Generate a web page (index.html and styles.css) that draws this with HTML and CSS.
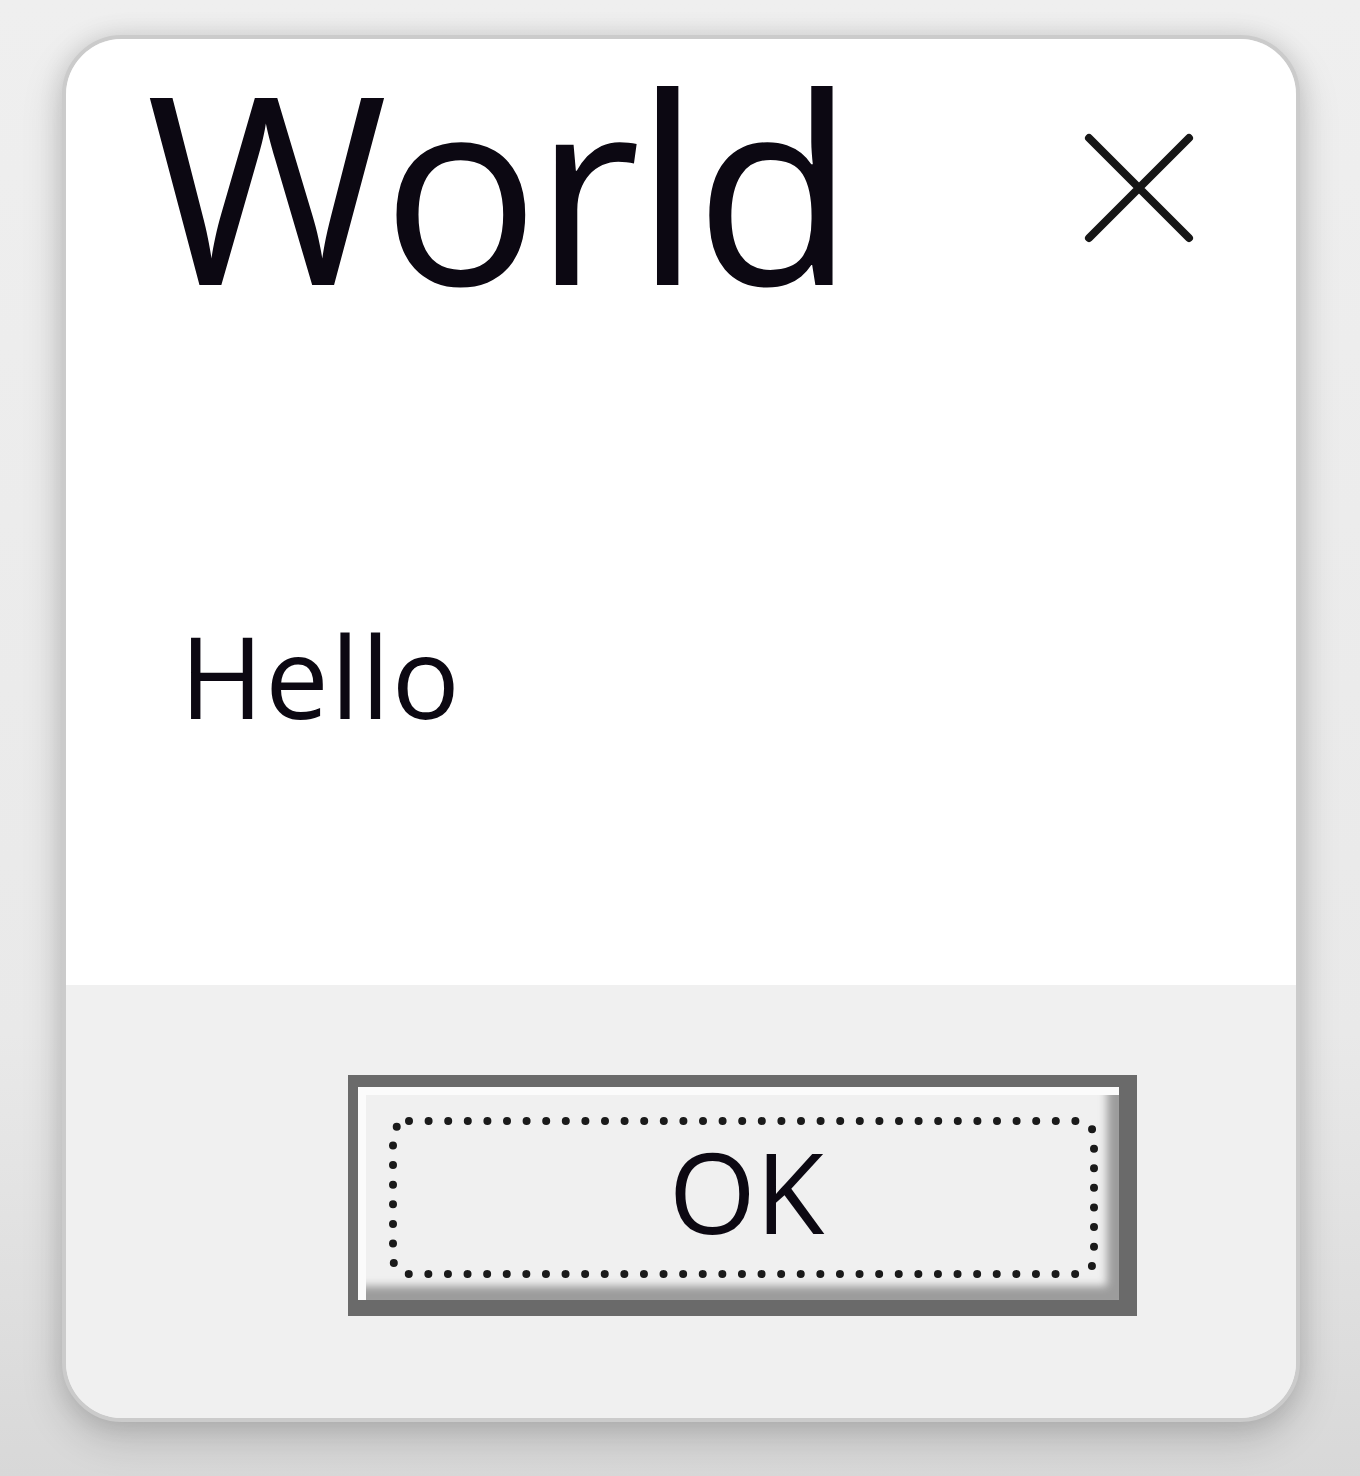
FILE: index.html
```html
<!DOCTYPE html>
<html>
<head>
<meta charset="utf-8">
<link rel="stylesheet" href="styles.css">
</head>
<body>
<div class="window">
  <div class="content">
    <div class="titlebar">
      <div class="title">World</div>
      <div class="close">
        <svg width="110" height="110" viewBox="0 0 110 110">
          <path d="M5 5 L105 105 M105 5 L5 105" stroke="#161616" stroke-width="8" stroke-linecap="round" fill="none"/>
        </svg>
      </div>
    </div>
    <div class="message">Hello</div>
  </div>
  <div class="footer">
    <div class="button">
      <svg class="focus-ring" width="789" height="241" viewBox="0 0 789 241">
        <rect x="45" y="46" width="701" height="153" rx="16" fill="none" stroke="#1a1a1a" stroke-width="8" stroke-linecap="round" stroke-dasharray="0 19.6"/>
      </svg>
      <span class="label">OK</span>
    </div>
  </div>
</div>
</body>
</html>
```
FILE: styles.css
```css
html, body {
  margin: 0;
  padding: 0;
}
body {
  width: 1360px;
  height: 1476px;
  background: linear-gradient(to bottom, #efefef 0%, #e9e9e9 70%, #d8d8d8 100%);
  font-family: "Open Sans", "Noto Sans", sans-serif;
  color: #0c0812;
  overflow: hidden;
  padding-top: 35px;
  box-sizing: border-box;
}
.window {
  margin-left: 62px;
  width: 1238px;
  height: 1387px;
  box-sizing: border-box;
  border: 4px solid #cbcbcb;
  border-radius: 60px;
  display: flex;
  flex-direction: column;
  background: #f0f0f0;
  box-shadow: 0 16px 40px rgba(0, 0, 0, 0.18), 0 0 24px rgba(0, 0, 0, 0.1);
}
.content {
  height: 946px;
  background: #ffffff;
  border-radius: 56px 56px 0 0;
  display: flex;
  flex-direction: column;
}
.titlebar {
  display: flex;
  justify-content: space-between;
  align-items: flex-start;
}
.title {
  font-size: 262px;
  line-height: normal;
  margin-top: -34px;
  margin-left: 80px;
  letter-spacing: -6px;
}
.close {
  margin-top: 94px;
  margin-right: 102px;
  width: 110px;
  height: 110px;
}
.message {
  margin-left: 114px;
  margin-top: 243px;
  font-size: 113px;
  line-height: 140px;
  letter-spacing: 2px;
}
.footer {
  flex: 1;
  background: #f0f0f0;
  border-radius: 0 0 56px 56px;
  display: flex;
  justify-content: flex-end;
  padding-top: 90px;
  padding-right: 159px;
}
.button {
  position: relative;
  width: 789px;
  height: 241px;
  box-sizing: border-box;
  border-style: solid;
  border-color: #6a6a6a;
  border-width: 12px 18px 16px 10px;
  box-shadow: inset 8px 8px 0 #fbfbfb, inset -12px -14px 8px #9c9c9c;
  background: #f0f0f0;
  display: flex;
  align-items: center;
  justify-content: center;
}
.focus-ring {
  position: absolute;
  left: -10px;
  top: -12px;
}
.label {
  position: relative;
  font-size: 112px;
  line-height: 1;
  margin-top: -6px;
  margin-left: 16px;
}
```
